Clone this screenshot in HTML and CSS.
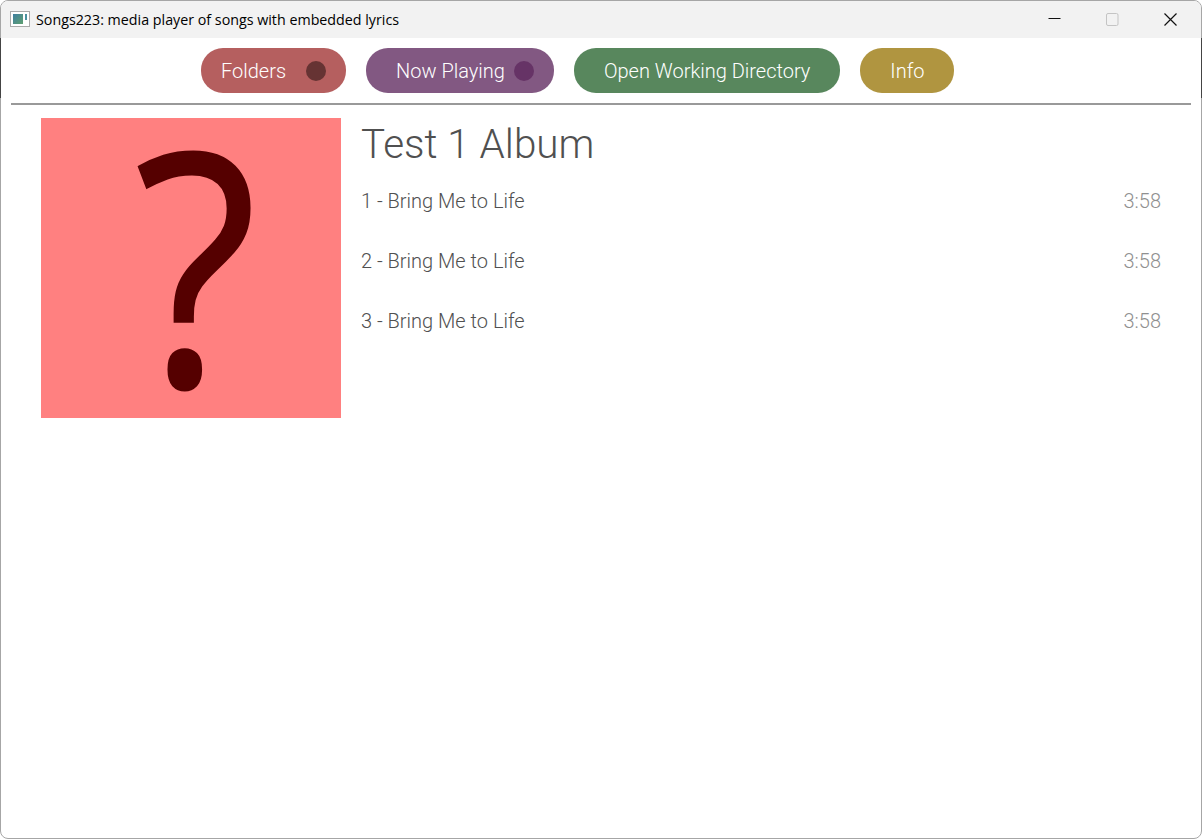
FILE: index.html
```html
<!DOCTYPE html>
<html lang="en">

<head>
    <meta charset="UTF-8">
    <meta name="viewport" content="width=device-width, initial-scale=1.0">
    <title>Songs223: media player of songs with embedded lyrics</title>
    <link rel="stylesheet" href="styles.css">
</head>

<body>
    <div class="window">
        <!-- Dark edges of what lies behind the window -->
        <span class="edge edge-left"></span>
        <span class="edge edge-right"></span>

        <!-- Title bar -->
        <div class="titlebar">
            <div class="app-icon">
                <span class="app-icon-fill"></span>
                <span class="app-icon-mark"></span>
            </div>
            <span class="title-text">Songs223: media player of songs with embedded lyrics</span>
            <div class="controls">
                <svg class="control control-min" width="13" height="13" viewBox="0 0 13 13">
                    <path d="M0.5 5.5H12.5" stroke="#111" stroke-width="1" fill="none" />
                </svg>
                <svg class="control control-max" width="13" height="13" viewBox="0 0 13 13">
                    <rect x="0.5" y="0.5" width="11.5" height="12" rx="1.5" stroke="#c4c4c4" stroke-width="1" fill="none" />
                </svg>
                <svg class="control control-close" width="13" height="13" viewBox="0 0 13 13">
                    <path d="M0.5 0.5L12.5 12.5M12.5 0.5L0.5 12.5" stroke="#111" stroke-width="1.2" fill="none" />
                </svg>
            </div>
        </div>

        <!-- Nav buttons -->
        <div class="nav">
            <button class="nav-btn btn-folders">Folders<span class="dot dot-folders"></span></button>
            <button class="nav-btn btn-playing">Now Playing<span class="dot dot-playing"></span></button>
            <button class="nav-btn btn-open">Open Working Directory</button>
            <button class="nav-btn btn-info">Info</button>
        </div>
        <div class="divider"></div>

        <!-- Album -->
        <div class="album">
            <div class="cover"><span class="cover-mark">?</span></div>
            <div class="album-info">
                <h1 class="album-title">Test 1 Album</h1>
                <div class="track"><span>1 - Bring Me to Life</span><span class="time">3:58</span></div>
                <div class="track"><span>2 - Bring Me to Life</span><span class="time">3:58</span></div>
                <div class="track"><span>3 - Bring Me to Life</span><span class="time">3:58</span></div>
            </div>
        </div>
    </div>
</body>

</html>
```

FILE: styles.css
```css
html,
body {
    margin: 0;
    height: 100%;
    background-color: #fff;
    overflow: hidden;
}

.window {
    box-sizing: border-box;
    position: relative;
    height: 839px;
    border: 1px solid #a6a6a6;
    border-radius: 8px;
    background-color: #fff;
    font-family: 'Roboto', sans-serif;
    font-weight: 300;
}

.edge {
    position: absolute;
    top: 37px;
    width: 1px;
    height: 60px;
    background-color: #444;
}

.edge-left {
    left: -1px;
}

.edge-right {
    right: -1px;
}

.titlebar {
    display: flex;
    align-items: center;
    height: 37px;
    padding-left: 9px;
    border-radius: 7px 7px 0 0;
    background-color: #f2f2f2;
    color: #000;
}

.app-icon {
    box-sizing: border-box;
    display: flex;
    justify-content: space-between;
    width: 20px;
    height: 16px;
    padding: 2px;
    border: 1px solid #aaa;
    background-color: #fff;
    margin-top: -2px;
}

.app-icon-fill {
    width: 10px;
    background: linear-gradient(135deg, #3f7fa0, #5fa070);
}

.app-icon-mark {
    width: 2px;
    height: 6px;
    background-color: #4a90a0;
}

.title-text {
    margin-left: 6px;
    margin-top: -1px;
    font-family: 'Open Sans', sans-serif;
    font-weight: 400;
    font-size: 14.28px;
}

.controls {
    display: flex;
    margin-left: auto;
    margin-right: 24px;
    gap: 45px;
}

.control {
    display: block;
    margin-top: -1px;
}

.nav {
    display: flex;
    gap: 20px;
    padding: 10px 0 0 200px;
}

.nav-btn {
    display: flex;
    align-items: center;
    height: 45px;
    padding: 0 30px;
    border: none;
    border-radius: 22px;
    color: #fff;
    font-family: 'Roboto', sans-serif;
    font-weight: 300;
    font-size: 20px;
}

.btn-folders {
    padding: 0 20px;
    background-color: #b55f5f;
}

.btn-playing {
    padding-right: 20px;
    background-color: #825882;
}

.btn-open {
    background-color: #58875d;
}

.btn-info {
    padding-right: 29px;
    background-color: #b09540;
}

.dot {
    width: 20px;
    height: 20px;
    border-radius: 50%;
}

.dot-folders {
    margin-left: 20px;
    background-color: #663333;
}

.dot-playing {
    margin-left: 9px;
    background-color: #663366;
}

.divider {
    height: 2px;
    margin: 10px 10px 0;
    background-color: #999;
}

.album {
    display: flex;
    padding: 13px 40px 0;
}

.cover {
    flex: none;
    display: flex;
    justify-content: center;
    width: 300px;
    height: 300px;
    background-color: #ff8080;
    color: #550000;
    font-family: 'Open Sans', sans-serif;
    font-weight: 400;
    font-size: 324px;
    line-height: 300px;
}

.cover-mark {
    display: block;
    margin-top: -7px;
    margin-right: -9px;
    transform: scaleX(0.88);
    -webkit-text-stroke: 2px #550000;
}

.album-info {
    flex: 1;
    padding-left: 20px;
    color: #505050;
}

.album-title {
    margin: 0;
    padding-top: 1px;
    font-weight: 300;
    font-size: 40.4px;
    line-height: 52px;
}

.track {
    display: flex;
    justify-content: space-between;
    align-items: center;
    height: 60px;
    font-size: 20px;
}

.time {
    color: #909090;
}
```
